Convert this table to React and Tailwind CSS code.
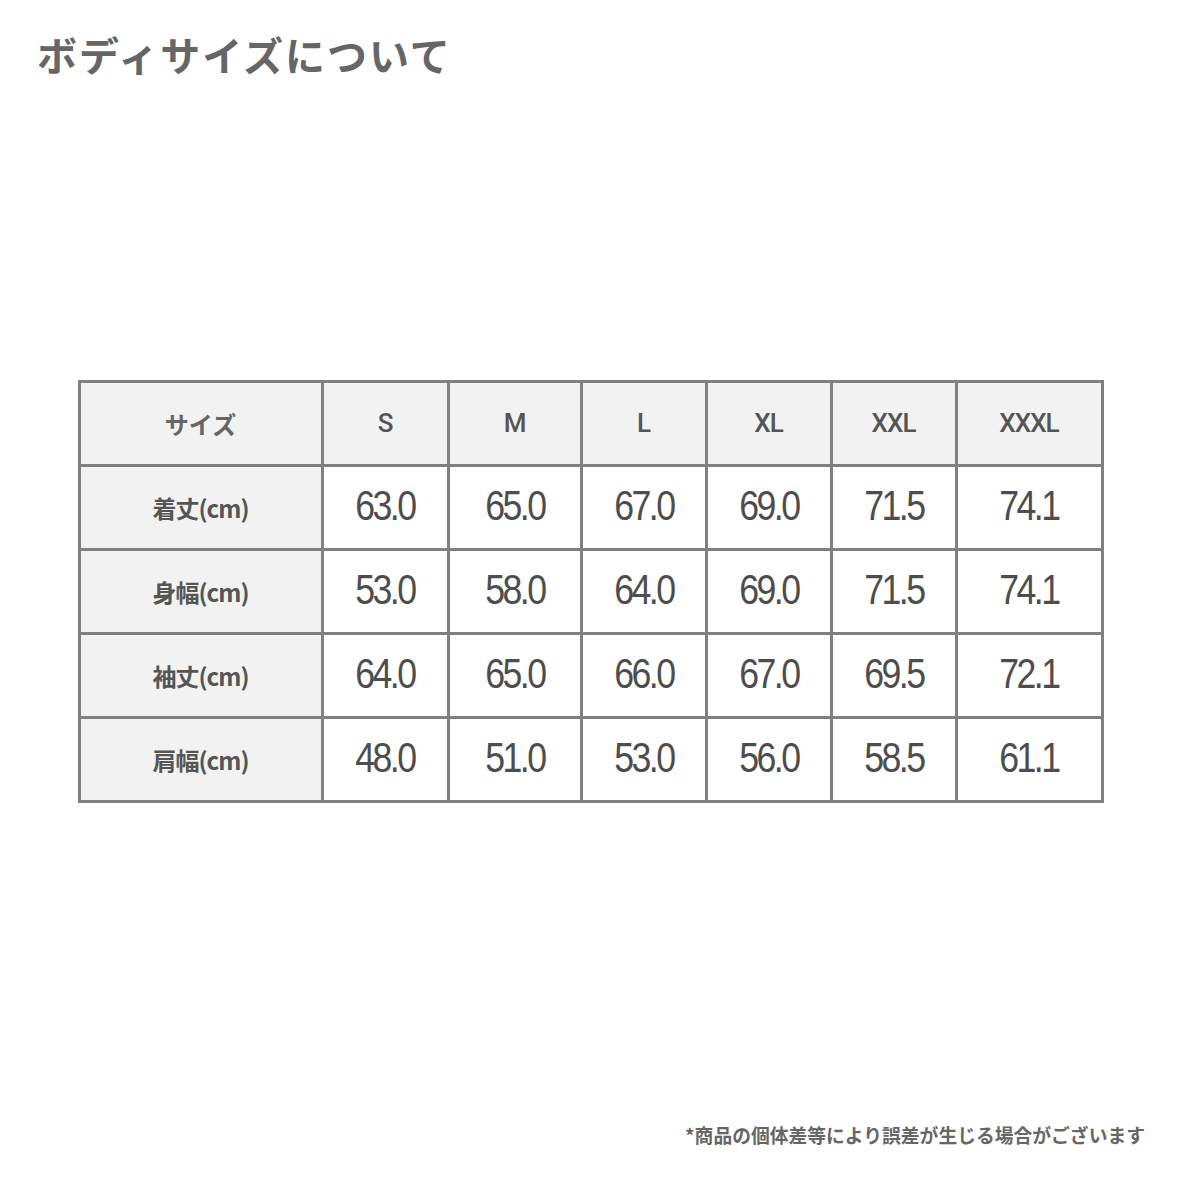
const sizes = ["S", "M", "L", "XL", "XXL", "XXXL"];
const colWidths = ["w-[243px]", "w-[126px]", "w-[133px]", "w-[125px]", "w-[125px]", "w-[125px]", "w-[146px]"];

const rows = [
  { label: "着丈(cm)", values: ["63.0", "65.0", "67.0", "69.0", "71.5", "74.1"] },
  { label: "身幅(cm)", values: ["53.0", "58.0", "64.0", "69.0", "71.5", "74.1"] },
  { label: "袖丈(cm)", values: ["64.0", "65.0", "66.0", "67.0", "69.5", "72.1"] },
  { label: "肩幅(cm)", values: ["48.0", "51.0", "53.0", "56.0", "58.5", "61.1"] },
];

const jp = { fontFamily: '"Noto Sans CJK JP", "Noto Sans", sans-serif' };
const num = { fontFamily: '"Liberation Sans", Arial, sans-serif' };
const head = { fontFamily: 'Roboto, "Liberation Sans", sans-serif' };

function App() {
  return (
    <div className="w-[1181px] h-[1181px] bg-white flex flex-col">
      <h1
        className="pt-[34px] pl-[37px] text-[40px] leading-none font-bold text-[#666666] tracking-[2px]"
        style={jp}
      >
        ボディサイズについて
      </h1>

      <div className="mt-[306px] flex justify-center">
        <table className="border-collapse table-fixed w-[1024px] border-[3px] border-[#808080]">
          <colgroup>
            {colWidths.map((w, i) => (
              <col key={i} className={w} />
            ))}
          </colgroup>
          <thead>
            <tr className="h-[84px] bg-[#f2f2f2]">
              <th
                className="border-[3px] border-[#808080] text-[24px] font-bold text-[#666666]"
                style={jp}
              >
                サイズ
              </th>
              {sizes.map((s) => (
                <th
                  key={s}
                  className="border-[3px] border-[#808080] text-[26px] font-medium text-[#555555] tracking-[-1px]"
                  style={head}
                >
                  {s}
                </th>
              ))}
            </tr>
          </thead>
          <tbody>
            {rows.map((r) => (
              <tr key={r.label} className="h-[84px]">
                <td
                  className="border-[3px] border-[#808080] bg-[#f2f2f2] text-center text-[24px] font-bold text-[#555555] tracking-[-1px]"
                  style={jp}
                >
                  {r.label}
                </td>
                {r.values.map((v, i) => (
                  <td
                    key={i}
                    className="border-[3px] border-[#808080] bg-white text-center pb-[4px]"
                  >
                    <span
                      className="inline-block scale-x-[0.85] text-[42px] text-[#4d4d4d] tracking-[-3px]"
                      style={num}
                    >
                      {v}
                    </span>
                  </td>
                ))}
              </tr>
            ))}
          </tbody>
        </table>
      </div>

      <p
        className="mt-[323px] pr-[36px] text-right text-[18.8px] leading-none font-bold text-[#666666]"
        style={jp}
      >
        *商品の個体差等により誤差が生じる場合がございます
      </p>
    </div>
  );
}

export default App;
